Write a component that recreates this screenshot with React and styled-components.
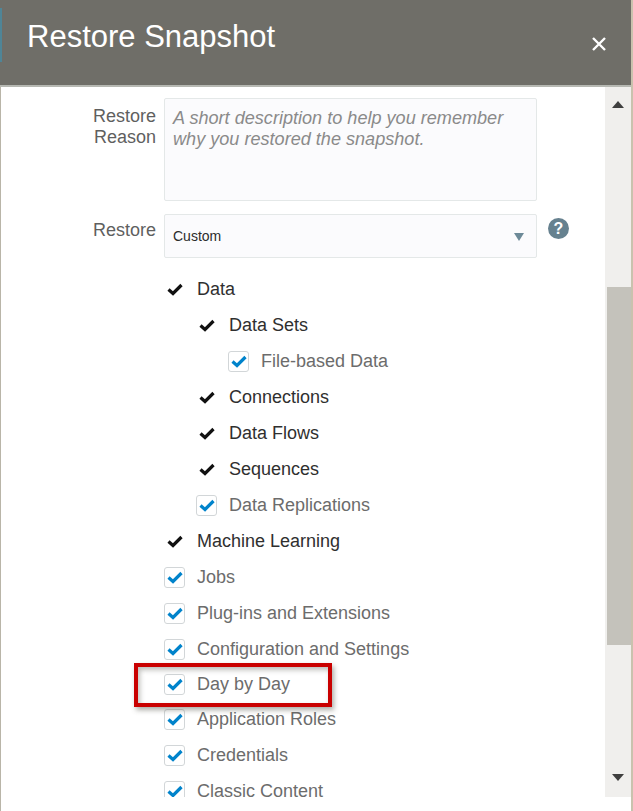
import React from 'react';
import styled, { createGlobalStyle } from 'styled-components';

const GlobalStyle = createGlobalStyle`
  html, body {
    margin: 0;
    padding: 0;
    background: #fff;
    font-family: "Liberation Sans", Arial, sans-serif;
  }
`;

const Dialog = styled.div`
  position: relative;
  width: 633px;
  height: 811px;
  overflow: hidden;
  background: #fff;
  box-sizing: border-box;
  border-right: 2px solid #c9c2ae;
  display: flex;
  flex-direction: column;
`;

const Header = styled.div`
  position: relative;
  height: 85px;
  flex: none;
  background: #6f6e68;
  border-bottom: 2px solid #b6b8b2;
  display: flex;
  justify-content: space-between;
  padding: 0 24px 0 27px;

  &::before {
    content: '';
    position: absolute;
    left: 0;
    top: 8px;
    width: 2px;
    height: 54px;
    background: #4f8597;
  }
`;

const Title = styled.div`
  color: #fff;
  font-size: 31px;
  line-height: 36px;
  margin-top: 19px;
`;

const CloseButton = styled.button`
  border: 0;
  background: none;
  padding: 0;
  width: 16px;
  height: 16px;
  margin-top: 36px;
  color: #fff;
  display: block;
`;

const Body = styled.div`
  display: flex;
  height: 710px;
  flex: none;
  min-height: 0;
  border-left: 1px solid #b9b5a8;
`;

const Content = styled.div`
  flex: 1;
  overflow: hidden;
  padding-top: 11px;
`;

const FormRow = styled.div`
  display: flex;
  align-items: flex-start;
  margin-bottom: ${(p) => p.$gap || 0}px;
`;

const FieldLabel = styled.div`
  width: 155px;
  flex: none;
  text-align: right;
  color: #5f5f5f;
  font-size: 18px;
  line-height: 21px;
  padding-top: ${(p) => p.$top || 0}px;
`;

const TextArea = styled.div`
  width: 373px;
  height: 103px;
  margin-left: 8px;
  box-sizing: border-box;
  background: #fbfbfd;
  border: 1px solid #e4e8e8;
  border-radius: 2px;
  padding: 9px 8px;
  color: #8a8a8a;
  font-size: 18.1px;
  font-style: italic;
  line-height: 21px;
`;

const SelectBox = styled.div`
  width: 373px;
  height: 44px;
  margin-left: 8px;
  box-sizing: border-box;
  background: #fbfbfd;
  border: 1px solid #e4e8e8;
  border-radius: 2px;
  padding: 0 12px 0 8px;
  color: #2c2c2c;
  font-size: 14px;
  display: flex;
  align-items: center;
  justify-content: space-between;
`;

const SelectArrow = styled.span`
  width: 0;
  height: 0;
  border-left: 5px solid transparent;
  border-right: 5px solid transparent;
  border-top: 8px solid #6d8a98;
  margin-top: 1px;
`;

const HelpIcon = styled.span`
  width: 21px;
  height: 21px;
  margin: 4px 0 0 11px;
  border-radius: 50%;
  background: #66818f;
  color: #fff;
  font-size: 16px;
  font-weight: bold;
  line-height: 21px;
  text-align: center;
`;

const Tree = styled.div`
  padding-top: 13px;
`;

const TreeRow = styled.div`
  height: ${(p) => p.$height || 36}px;
  display: flex;
  align-items: center;
  padding-left: ${(p) => 163 + p.$level * 32}px;
`;

const IconSlot = styled.span`
  width: 21px;
  height: 21px;
  margin-right: 12px;
  flex: none;
  display: flex;
  align-items: center;
  justify-content: center;
`;

const CheckBox = styled(IconSlot)`
  box-sizing: border-box;
  background: #fff;
  border: 1.5px solid #d2d6d8;
  border-radius: 3px;
  color: #0083cb;
`;

const PlainCheck = styled(IconSlot)`
  color: #111;
`;

const RowLabel = styled.span`
  font-size: 18px;
  color: ${(p) => (p.$dark ? '#2f2f2f' : '#6c6c6c')};
  white-space: nowrap;
`;

const Scrollbar = styled.div`
  width: 26px;
  flex: none;
  background: #f0efed;
  display: flex;
  flex-direction: column;
  align-items: center;
`;

const ArrowUp = styled.span`
  width: 0;
  height: 0;
  margin-top: 14px;
  border-left: 6px solid transparent;
  border-right: 6px solid transparent;
  border-bottom: 7px solid #3f3f3f;
`;

const Thumb = styled.div`
  width: 24px;
  height: 358px;
  margin-top: 179px;
  align-self: flex-end;
  background: #c4c2bb;
`;

const ArrowDown = styled.span`
  width: 0;
  height: 0;
  margin-top: 129px;
  border-left: 6px solid transparent;
  border-right: 6px solid transparent;
  border-top: 7px solid #3f3f3f;
`;

const Footer = styled.div`
  flex: 1;
  background: #fff;
  border-left: 1px solid #b9b5a8;
`;

const Highlight = styled.div`
  position: absolute;
  left: 134px;
  top: 663px;
  width: 198px;
  height: 44px;
  box-sizing: border-box;
  border: 4px solid #c90000;
  box-shadow: 2px 3px 5px rgba(70, 70, 60, 0.45), inset 2px 3px 5px rgba(70, 70, 60, 0.35);
  pointer-events: none;
`;

const CheckGlyph = () => (
  <svg width="16" height="13" viewBox="0 0 16 13" fill="none" stroke="currentColor" strokeWidth="3.2">
    <path d="M1.5 6.5 L6 10.5 L14.5 2" />
  </svg>
);

const treeItems = [
  { label: 'Data', level: 0, kind: 'plain' },
  { label: 'Data Sets', level: 1, kind: 'plain' },
  { label: 'File-based Data', level: 2, kind: 'box' },
  { label: 'Connections', level: 1, kind: 'plain' },
  { label: 'Data Flows', level: 1, kind: 'plain' },
  { label: 'Sequences', level: 1, kind: 'plain' },
  { label: 'Data Replications', level: 1, kind: 'box' },
  { label: 'Machine Learning', level: 0, kind: 'plain' },
  { label: 'Jobs', level: 0, kind: 'box' },
  { label: 'Plug-ins and Extensions', level: 0, kind: 'box' },
  { label: 'Configuration and Settings', level: 0, kind: 'box' },
  { label: 'Day by Day', level: 0, kind: 'box', height: 34 },
  { label: 'Application Roles', level: 0, kind: 'box' },
  { label: 'Credentials', level: 0, kind: 'box' },
  { label: 'Classic Content', level: 0, kind: 'box' },
];

const App = () => (
  <Dialog>
    <GlobalStyle />
    <Header>
      <Title>Restore Snapshot</Title>
      <CloseButton aria-label="Close">
        <svg width="16" height="16" viewBox="0 0 16 16" fill="none" stroke="currentColor" strokeWidth="2.4">
          <path d="M2 2 L14 14 M14 2 L2 14" />
        </svg>
      </CloseButton>
    </Header>
    <Body>
      <Content>
        <FormRow $gap={13}>
          <FieldLabel $top={8}>
            Restore
            <br />
            Reason
          </FieldLabel>
          <TextArea>
            A short description to help you remember why you restored the snapshot.
          </TextArea>
        </FormRow>
        <FormRow>
          <FieldLabel $top={6}>Restore</FieldLabel>
          <SelectBox>
            Custom
            <SelectArrow />
          </SelectBox>
          <HelpIcon>?</HelpIcon>
        </FormRow>
        <Tree>
          {treeItems.map((item) => {
            const dark = item.kind === 'plain';
            return (
              <TreeRow key={item.label} $level={item.level} $height={item.height}>
                {dark ? (
                  <PlainCheck>
                    <CheckGlyph />
                  </PlainCheck>
                ) : (
                  <CheckBox>
                    <CheckGlyph />
                  </CheckBox>
                )}
                <RowLabel $dark={dark}>{item.label}</RowLabel>
              </TreeRow>
            );
          })}
        </Tree>
      </Content>
      <Scrollbar>
        <ArrowUp />
        <Thumb />
        <ArrowDown />
      </Scrollbar>
    </Body>
    <Footer />
    <Highlight />
  </Dialog>
);

export default App;
